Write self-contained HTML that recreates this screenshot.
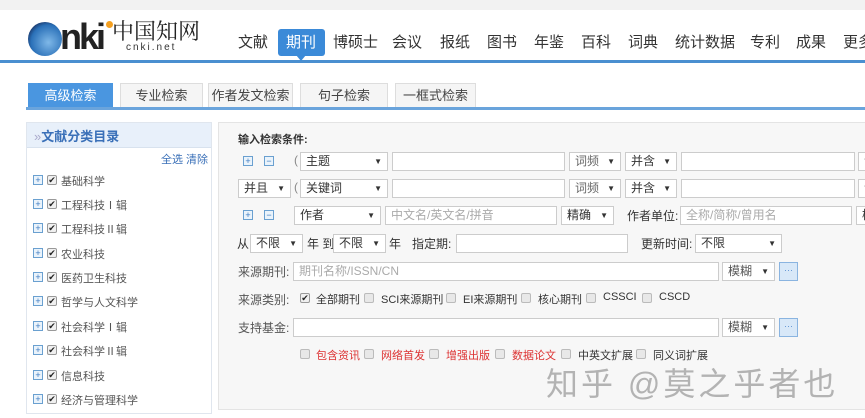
<!DOCTYPE html><html><head><meta charset="utf-8"><style>
*{margin:0;padding:0;box-sizing:border-box}
body{width:865px;height:418px;overflow:hidden;background:#fff;font-family:"Liberation Sans","Noto Sans CJK SC",sans-serif;color:#333;position:relative}
.a{position:absolute;white-space:nowrap}
.nav{font-size:15px;color:#333;top:31px}
.tab{position:absolute;top:83px;height:25px;border:1px solid #ddd;border-bottom:none;background:#f5f5f5;font-size:13px;color:#444;text-align:center;line-height:24px}
.sel,.inp{position:absolute;height:19px;border:1px solid #ccc;background:#fff;font-size:12px;line-height:17px;padding-left:5px;color:#333}
.sel:after{content:"▼";position:absolute;right:5px;top:0;font-size:8px;color:#333}
.ph{color:#aaa}
.ic{position:absolute;width:10px;height:10px;border:1px solid #6aa0d0;background:#eaf3fb;font-size:9px;line-height:8px;text-align:center;color:#3a7ac0}
.cb{position:absolute;width:10px;height:10px;border:1px solid #bbb;background:#e8e8e8;border-radius:2px}
.ck{position:absolute;width:10px;height:10px;border:1px solid #999;background:#f0f0f0;border-radius:2px;font-size:9px;line-height:8px;text-align:center;color:#222}
.t12{font-size:12px;color:#333}
.lt{font-size:11px;color:#555}
.red{color:#d33}
.dots{position:absolute;width:19px;height:19px;border:1px solid #8ab4e0;background:#d8e8f8;color:#5a8fd0;font-size:9px;text-align:center;line-height:15px}
</style></head><body>
<div class="a" style="left:0;top:0;width:865px;height:10px;background:#f2f2f2"></div>
<div class="a" style="left:0;top:60px;width:865px;height:3px;background:#4a8fd0"></div>
<!-- logo -->
<div class="a" style="left:28px;top:22px;width:34px;height:34px;border-radius:50%;background:radial-gradient(circle at 60% 60%,#7fb8e8,#2a70b8 60%,#113 90%);"></div>
<div class="a" style="left:60px;top:16px;font-size:36px;font-weight:bold;color:#222;letter-spacing:-3px;font-family:'Liberation Sans',sans-serif">nki</div>
<div class="a" style="left:106px;top:21px;width:7px;height:7px;border-radius:50%;background:#f5a020"></div>
<div class="a" style="left:112px;top:15px;font-size:22px;color:#222;font-family:'Noto Serif CJK SC',serif">中国知网</div>
<div class="a" style="left:126px;top:42px;font-size:10px;letter-spacing:2px;color:#333">cnki.net</div>
<div class="a nav" style="left:238px">文献</div>
<div class="a" style="left:278px;top:29px;width:47px;height:27px;background:#3b8ad8;border-radius:3px"></div>
<div class="a" style="left:296px;top:55px;width:0;height:0;border-left:5px solid transparent;border-right:5px solid transparent;border-top:6px solid #3b8ad8"></div>
<div class="a nav" style="left:286px;color:#fff">期刊</div>
<div class="a nav" style="left:333px">博硕士</div>
<div class="a nav" style="left:392px">会议</div>
<div class="a nav" style="left:440px">报纸</div>
<div class="a nav" style="left:487px">图书</div>
<div class="a nav" style="left:534px">年鉴</div>
<div class="a nav" style="left:581px">百科</div>
<div class="a nav" style="left:628px">词典</div>
<div class="a nav" style="left:675px">统计数据</div>
<div class="a nav" style="left:750px">专利</div>
<div class="a nav" style="left:796px">成果</div>
<div class="a nav" style="left:843px">更多</div>
<!-- tabs -->
<div class="tab" style="left:28px;width:85px;background:#4a96e0;color:#fff;border-color:#4a96e0">高级检索</div>
<div class="tab" style="left:120px;width:83px">专业检索</div>
<div class="tab" style="left:208px;width:85px">作者发文检索</div>
<div class="tab" style="left:300px;width:88px">句子检索</div>
<div class="tab" style="left:395px;width:81px">一框式检索</div>
<div class="a" style="left:26px;top:107px;width:839px;height:3px;background:#6aa4dc"></div>
<!-- left panel -->
<div class="a" style="left:26px;top:122px;width:186px;height:292px;border:1px solid #e0e6ee;background:#fff"></div>
<div class="a" style="left:27px;top:123px;width:184px;height:25px;background:#e8f0fa;border-bottom:1px solid #d8e2ee"></div>
<div class="a" style="left:34px;top:126px;font-size:13px;font-weight:bold;color:#3a70b8"><span style="color:#aac;font-weight:normal">»</span>文献分类目录</div>
<div class="a" style="left:161px;top:151px;font-size:11px;color:#3a70b8">全选 清除</div>
<div class="ic" style="left:33px;top:175px">+</div><div class="ck" style="left:47px;top:175px">✔</div><div class="a lt" style="left:61px;top:173px">基础科学</div>
<div class="ic" style="left:33px;top:199px">+</div><div class="ck" style="left:47px;top:199px">✔</div><div class="a lt" style="left:61px;top:197px">工程科技Ⅰ辑</div>
<div class="ic" style="left:33px;top:223px">+</div><div class="ck" style="left:47px;top:223px">✔</div><div class="a lt" style="left:61px;top:221px">工程科技Ⅱ辑</div>
<div class="ic" style="left:33px;top:248px">+</div><div class="ck" style="left:47px;top:248px">✔</div><div class="a lt" style="left:61px;top:246px">农业科技</div>
<div class="ic" style="left:33px;top:272px">+</div><div class="ck" style="left:47px;top:272px">✔</div><div class="a lt" style="left:61px;top:270px">医药卫生科技</div>
<div class="ic" style="left:33px;top:296px">+</div><div class="ck" style="left:47px;top:296px">✔</div><div class="a lt" style="left:61px;top:294px">哲学与人文科学</div>
<div class="ic" style="left:33px;top:321px">+</div><div class="ck" style="left:47px;top:321px">✔</div><div class="a lt" style="left:61px;top:319px">社会科学Ⅰ辑</div>
<div class="ic" style="left:33px;top:345px">+</div><div class="ck" style="left:47px;top:345px">✔</div><div class="a lt" style="left:61px;top:343px">社会科学Ⅱ辑</div>
<div class="ic" style="left:33px;top:370px">+</div><div class="ck" style="left:47px;top:370px">✔</div><div class="a lt" style="left:61px;top:368px">信息科技</div>
<div class="ic" style="left:33px;top:394px">+</div><div class="ck" style="left:47px;top:394px">✔</div><div class="a lt" style="left:61px;top:392px">经济与管理科学</div>
<!-- main panel -->
<div class="a" style="left:218px;top:122px;width:660px;height:288px;border:1px solid #e4e4e4;background:#f7f7f7"></div>
<div class="a" style="left:238px;top:131px;font-size:11px;font-weight:bold;color:#333">输入检索条件:</div>
<!-- row1 -->
<div class="ic" style="left:243px;top:156px">+</div><div class="ic" style="left:264px;top:156px">−</div>
<div class="a t12" style="left:294px;top:153px;color:#888">(</div>
<div class="sel" style="left:300px;top:152px;width:88px">主题</div>
<div class="inp" style="left:392px;top:152px;width:173px"></div>
<div class="sel" style="left:569px;top:152px;width:52px;color:#666">词频</div>
<div class="sel" style="left:625px;top:152px;width:52px">并含</div>
<div class="inp" style="left:681px;top:152px;width:174px"></div>
<div class="inp" style="left:858px;top:152px;width:20px;color:#666">词</div>
<!-- row2 -->
<div class="sel" style="left:238px;top:179px;width:53px">并且</div>
<div class="a t12" style="left:294px;top:180px;color:#888">(</div>
<div class="sel" style="left:300px;top:179px;width:88px">关键词</div>
<div class="inp" style="left:392px;top:179px;width:173px"></div>
<div class="sel" style="left:569px;top:179px;width:52px;color:#666">词频</div>
<div class="sel" style="left:625px;top:179px;width:52px">并含</div>
<div class="inp" style="left:681px;top:179px;width:174px"></div>
<div class="inp" style="left:858px;top:179px;width:20px;color:#666">词</div>
<!-- row3 -->
<div class="ic" style="left:243px;top:210px">+</div><div class="ic" style="left:264px;top:210px">−</div>
<div class="sel" style="left:294px;top:206px;width:87px">作者</div>
<div class="inp ph" style="left:385px;top:206px;width:172px">中文名/英文名/拼音</div>
<div class="sel" style="left:561px;top:206px;width:53px">精确</div>
<div class="a t12" style="left:627px;top:207px">作者单位:</div>
<div class="inp ph" style="left:680px;top:206px;width:172px">全称/简称/曾用名</div>
<div class="inp" style="left:856px;top:206px;width:20px">模</div>
<!-- row4 -->
<div class="a t12" style="left:237px;top:235px">从</div>
<div class="sel" style="left:250px;top:234px;width:53px">不限</div>
<div class="a t12" style="left:307px;top:235px">年 到</div>
<div class="sel" style="left:333px;top:234px;width:53px">不限</div>
<div class="a t12" style="left:389px;top:235px">年</div>
<div class="a t12" style="left:412px;top:235px">指定期:</div>
<div class="inp" style="left:456px;top:234px;width:172px"></div>
<div class="a t12" style="left:641px;top:235px">更新时间:</div>
<div class="sel" style="left:695px;top:234px;width:87px">不限</div>
<!-- source -->
<div class="a t12" style="left:238px;top:263px;color:#555">来源期刊:</div>
<div class="inp ph" style="left:293px;top:262px;width:426px">期刊名称/ISSN/CN</div>
<div class="sel" style="left:722px;top:262px;width:53px;color:#555">模糊</div>
<div class="dots" style="left:779px;top:262px">···</div>
<div class="a t12" style="left:238px;top:291px;color:#555">来源类别:</div>
<div class="ck" style="left:300px;top:293px">✔</div><div class="a lt" style="left:316px;top:291px;color:#333">全部期刊</div>
<div class="cb" style="left:364px;top:293px"></div><div class="a lt" style="left:381px;top:291px;color:#333">SCI来源期刊</div>
<div class="cb" style="left:446px;top:293px"></div><div class="a lt" style="left:463px;top:291px;color:#333">EI来源期刊</div>
<div class="cb" style="left:521px;top:293px"></div><div class="a lt" style="left:538px;top:291px;color:#333">核心期刊</div>
<div class="cb" style="left:586px;top:293px"></div><div class="a lt" style="left:603px;top:291px;color:#333">CSSCI</div>
<div class="cb" style="left:642px;top:293px"></div><div class="a lt" style="left:659px;top:291px;color:#333">CSCD</div>
<div class="a t12" style="left:238px;top:319px;color:#555">支持基金:</div>
<div class="inp" style="left:293px;top:318px;width:426px"></div>
<div class="sel" style="left:722px;top:318px;width:53px;color:#555">模糊</div>
<div class="dots" style="left:779px;top:318px">···</div>
<div class="cb" style="left:300px;top:349px"></div><div class="a lt red" style="left:316px;top:347px">包含资讯</div>
<div class="cb" style="left:364px;top:349px"></div><div class="a lt red" style="left:381px;top:347px">网络首发</div>
<div class="cb" style="left:429px;top:349px"></div><div class="a lt red" style="left:446px;top:347px">增强出版</div>
<div class="cb" style="left:495px;top:349px"></div><div class="a lt red" style="left:512px;top:347px">数据论文</div>
<div class="cb" style="left:561px;top:349px"></div><div class="a lt" style="left:578px;top:347px;color:#333">中英文扩展</div>
<div class="cb" style="left:636px;top:349px"></div><div class="a lt" style="left:653px;top:347px;color:#333">同义词扩展</div>
<div class="a" style="left:546px;top:359px;font-size:32px;letter-spacing:3px;color:rgba(150,150,150,0.7)">知乎 @莫之乎者也</div>
</body></html>
